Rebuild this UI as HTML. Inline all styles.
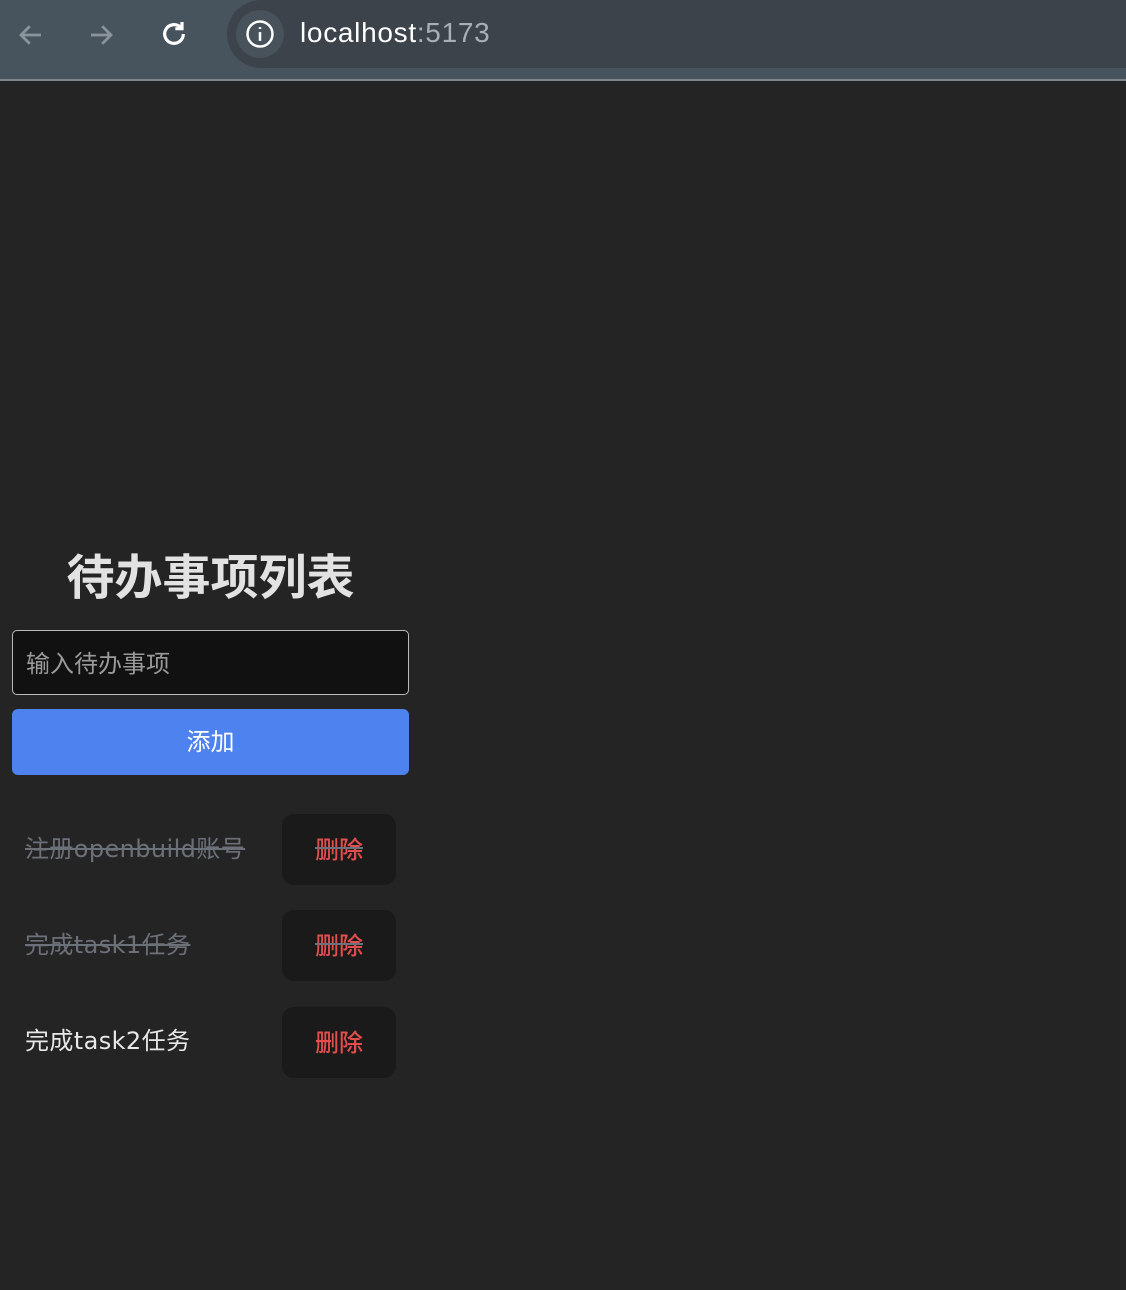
<!DOCTYPE html>
<html><head><meta charset="utf-8"><style>
*{margin:0;padding:0;box-sizing:border-box}
body{width:1126px;height:1290px;background:#242424;font-family:"DejaVu Sans","Noto Sans CJK SC",sans-serif;position:relative;overflow:hidden}
.bar{position:absolute;left:0;top:0;width:1126px;height:81px;background:#47545e;border-bottom:2px solid #7d868d}
.addr{position:absolute;left:227px;top:0;width:910px;height:68px;background:#3c434b;border-radius:34px 0 0 34px}
.info{position:absolute;left:236px;top:10px;width:48px;height:48px;border-radius:50%;background:#47525b}
.url{position:absolute;left:300px;top:17px;font-size:28px;color:#fff;font-family:"Liberation Sans",sans-serif;letter-spacing:0.7px}
.url span{color:#a9afb4}
h1{position:absolute;left:12px;width:397px;top:543px;text-align:center;font-size:48px;color:#e2e2e2;font-weight:bold;line-height:60px;font-family:"Noto Sans CJK SC",sans-serif}
.inp{position:absolute;left:12px;top:630px;width:397px;height:65px;background:#111;border:1px solid #bbb;border-radius:5px;color:#9a9a9a;font-size:24px;padding-left:13px;line-height:61px;font-family:"Noto Sans CJK SC",sans-serif}
.add{position:absolute;left:12px;top:709px;width:397px;height:66px;background:#4e82ee;border-radius:6px;color:#fff;font-size:24px;text-align:center;line-height:62px;font-family:"Noto Sans CJK SC",sans-serif}
.t{position:absolute;left:25px;font-size:24px;color:#e8e8e8;line-height:30px;letter-spacing:0.4px}
.done{color:#6b7079;text-decoration:line-through}
.del{position:absolute;left:282px;width:114px;height:71px;background:#1a1a1a;border-radius:12px;color:#e04e4e;font-size:24px;text-align:center;line-height:67px;font-family:"Noto Sans CJK SC",sans-serif;font-weight:500}
.del.done{text-decoration:line-through;text-decoration-color:#6b7079;color:#e04e4e}
</style></head><body>
<div class="bar">
<svg style="position:absolute;left:16px;top:20px" width="30" height="30" viewBox="0 0 24 24" fill="none" stroke="#8b949b" stroke-width="2.2"><path d="M20 12H5M11 5l-7 7 7 7"/></svg>
<svg style="position:absolute;left:86px;top:20px" width="30" height="30" viewBox="0 0 24 24" fill="none" stroke="#8b949b" stroke-width="2.2"><path d="M4 12h15M13 5l7 7-7 7"/></svg>
<svg style="position:absolute;left:158px;top:18px" width="32" height="32" viewBox="0 0 24 24" fill="none" stroke="#fff" stroke-width="2.4"><path d="M19 12a7 7 0 1 1-2.1-5"/><path d="M18 3v5h-5" stroke-linejoin="miter"/></svg>
<div class="addr"></div>
<div class="info"></div>
<svg style="position:absolute;left:245px;top:19px" width="30" height="30" viewBox="0 0 24 24" fill="none" stroke="#fff" stroke-width="2"><circle cx="12" cy="12" r="10"/><path d="M12 10.5v7M12 6.5v1.5"/></svg>
<div class="url">localhost<span>:5173</span></div>
</div>
<h1>待办事项列表</h1>
<div class="inp">输入待办事项</div>
<div class="add">添加</div>
<div class="t done" style="top:834px">注册openbuild账号</div>
<div class="del done" style="top:814px">删除</div>
<div class="t done" style="top:930px">完成task1任务</div>
<div class="del done" style="top:910px">删除</div>
<div class="t" style="top:1026px">完成task2任务</div>
<div class="del" style="top:1007px">删除</div>
</body></html>
